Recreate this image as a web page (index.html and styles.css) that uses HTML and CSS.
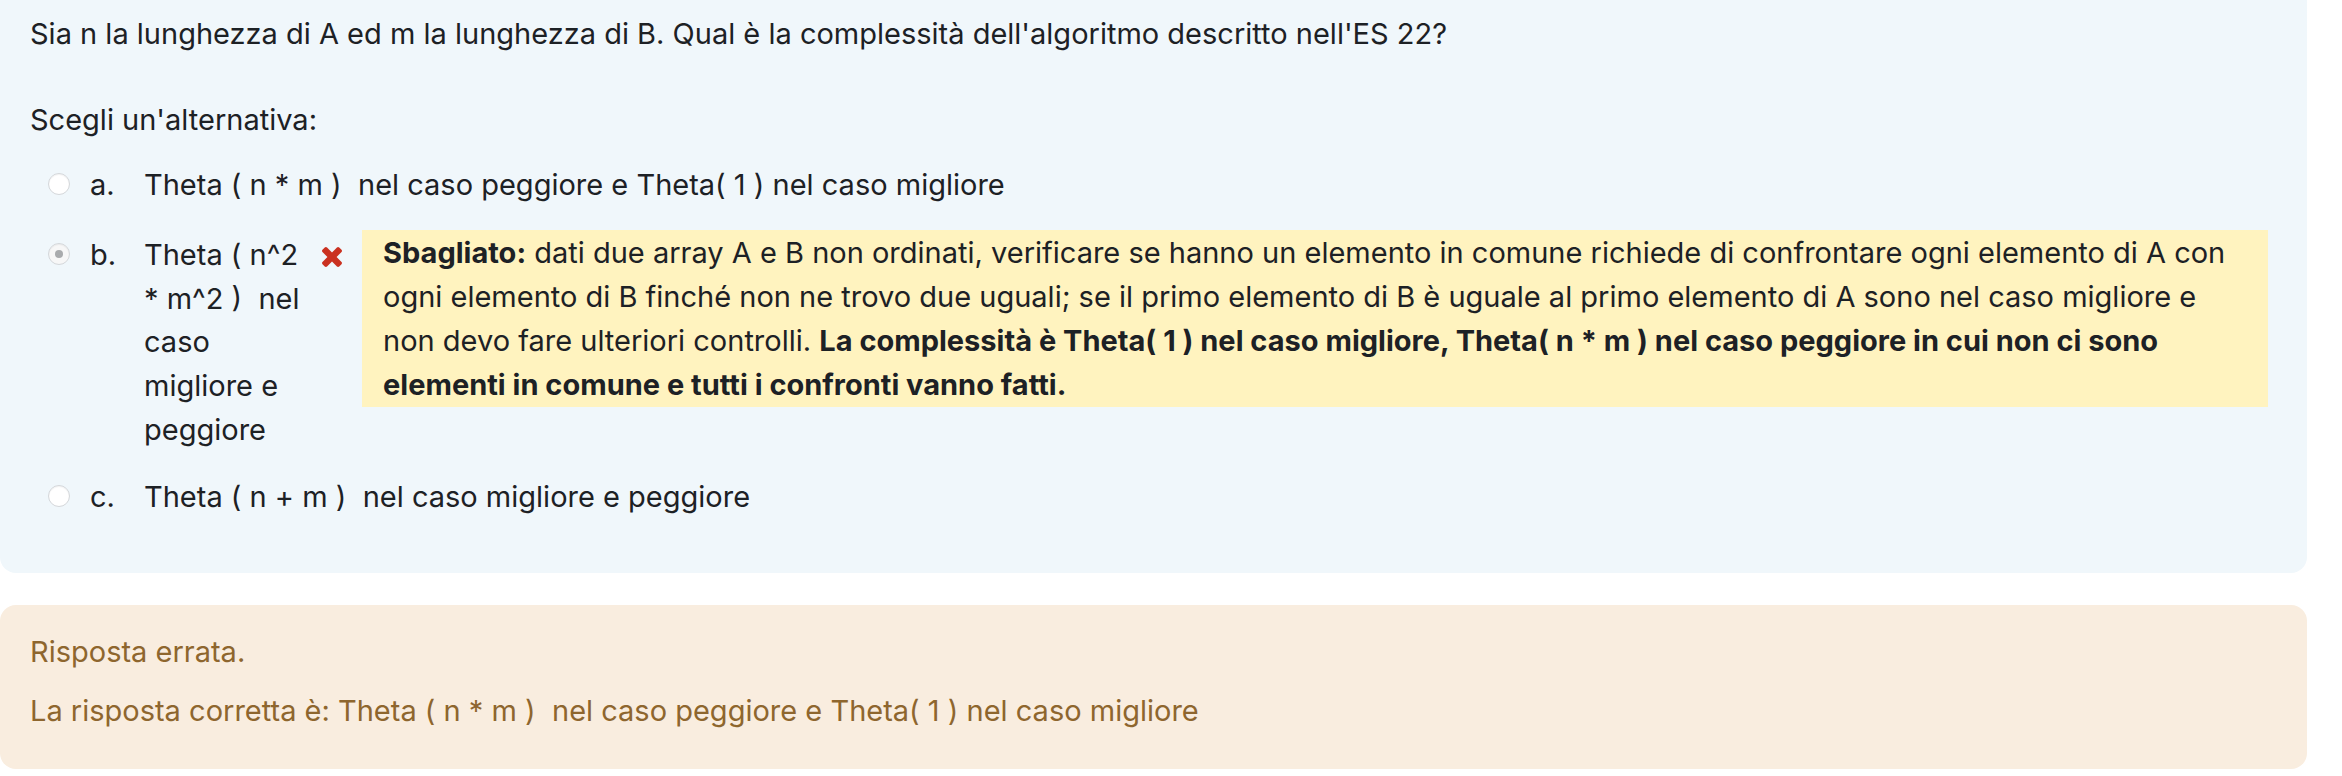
FILE: index.html
```html
<!DOCTYPE html>
<html lang="it">
<head>
<meta charset="utf-8">
<title>Domanda</title>
<link rel="stylesheet" href="styles.css">
</head>
<body>
<div class="que">
  <div class="formulation">
    <div class="qtext">Sia n la lunghezza di A ed m la lunghezza di B. Qual è la complessità dell'algoritmo descritto nell'ES 22?</div>
    <div class="ablock">
      <div class="prompt">Scegli un'alternativa:</div>
      <div class="answer">
        <div class="row">
          <span class="radio"></span>
          <div class="label">
            <span class="answernumber">a.</span>
            <div class="choice-text">Theta ( n * m )&nbsp; nel caso peggiore e Theta( 1 ) nel caso migliore</div>
          </div>
        </div>
        <div class="row incorrect">
          <span class="radio checked"></span>
          <div class="label">
            <span class="answernumber">b.</span>
            <div class="choice-text narrow">Theta ( n^2 * m^2 )&nbsp; nel caso migliore e peggiore</div>
          </div>
          <svg class="icon-remove" viewBox="110 366 1188 1188" aria-hidden="true"><path d="M1298 1322q0 40-28 68l-136 136q-28 28-68 28t-68-28l-294-294-294 294q-28 28-68 28t-68-28l-136-136q-28-28-28-68t28-68l294-294-294-294q-28-28-28-68t28-68l136-136q28-28 68-28t68 28l294 294 294-294q28-28 68-28t68 28l136 136q28 28 28 68t-28 68l-294 294 294 294q28 28 28 68z"/></svg>
          <div class="specificfeedback"><strong>Sbagliato:</strong> dati due array A e B non ordinati, verificare se hanno un elemento in comune richiede di confrontare ogni elemento di A con ogni elemento di B finché non ne trovo due uguali; se il primo elemento di B è uguale al primo elemento di A sono nel caso migliore e non devo fare ulteriori controlli. <strong>La complessità è Theta( 1 ) nel caso migliore, Theta( n * m ) nel caso peggiore in cui non ci sono elementi in comune e tutti i confronti vanno fatti.</strong></div>
        </div>
        <div class="row">
          <span class="radio"></span>
          <div class="label">
            <span class="answernumber">c.</span>
            <div class="choice-text">Theta ( n + m )&nbsp; nel caso migliore e peggiore</div>
          </div>
        </div>
      </div>
    </div>
  </div>
  <div class="outcome">
    <div class="feedback-line">Risposta errata.</div>
    <div class="feedback-line rightanswer">La risposta corretta è: Theta ( n * m )&nbsp; nel caso peggiore e Theta( 1 ) nel caso migliore</div>
  </div>
</div>
</body>
</html>
```
FILE: styles.css
```css
html, body {
  margin: 0;
  padding: 0;
  background: #ffffff;
}

body {
  font-family: Inter, "Noto Sans", "Liberation Sans", sans-serif;
  font-size: 29px;
  line-height: 43.8px;
  color: #1d2125;
}

.que {
  width: 2307px;
}

.formulation {
  background: #f0f7fb;
  border-radius: 0 0 16px 16px;
  padding: 12px 30px 53.5px 30px;
}

.qtext {
  margin-bottom: 42.5px;
}

.prompt {
  margin-bottom: 20.5px;
}

.answer {
  display: flex;
  flex-direction: column;
  gap: 23.5px;
}

.row {
  display: flex;
  align-items: flex-start;
}

.row.incorrect {
  margin-top: 3px;
}

.radio {
  flex: 0 0 auto;
  width: 22px;
  height: 22px;
  box-sizing: border-box;
  border-radius: 50%;
  border: 1px solid #d4d7da;
  background: #ffffff;
  box-shadow: inset 0 1px 1px rgba(0, 0, 0, 0.05);
  margin: 10px 0 0 18px;
  display: flex;
  align-items: center;
  justify-content: center;
}

.radio.checked {
  background: #f7f7f7;
}

.radio.checked::after {
  content: "";
  width: 8px;
  height: 8px;
  border-radius: 50%;
  background: #a9abad;
}

.label {
  display: flex;
  align-items: flex-start;
  margin-left: 20px;
}

.answernumber {
  flex: 0 0 54px;
}

.choice-text.narrow {
  width: 169px;
}

.icon-remove {
  flex: 0 0 auto;
  width: 20px;
  height: 20px;
  fill: #ca3120;
  margin: 14px 20px 0 9px;
}

.specificfeedback {
  flex: 1 1 auto;
  background: #fff3bf;
  padding: 1.5px 21px 0 21px;
  margin: -3px 9px 0 0;
}

.specificfeedback strong {
  font-weight: 700;
}

.outcome {
  margin-top: 32px;
  background: #f9eddf;
  color: #8e662e;
  border-radius: 16px;
  padding: 25.5px 30px 36.5px 30px;
}

.rightanswer {
  margin-top: 15.2px;
}
```
